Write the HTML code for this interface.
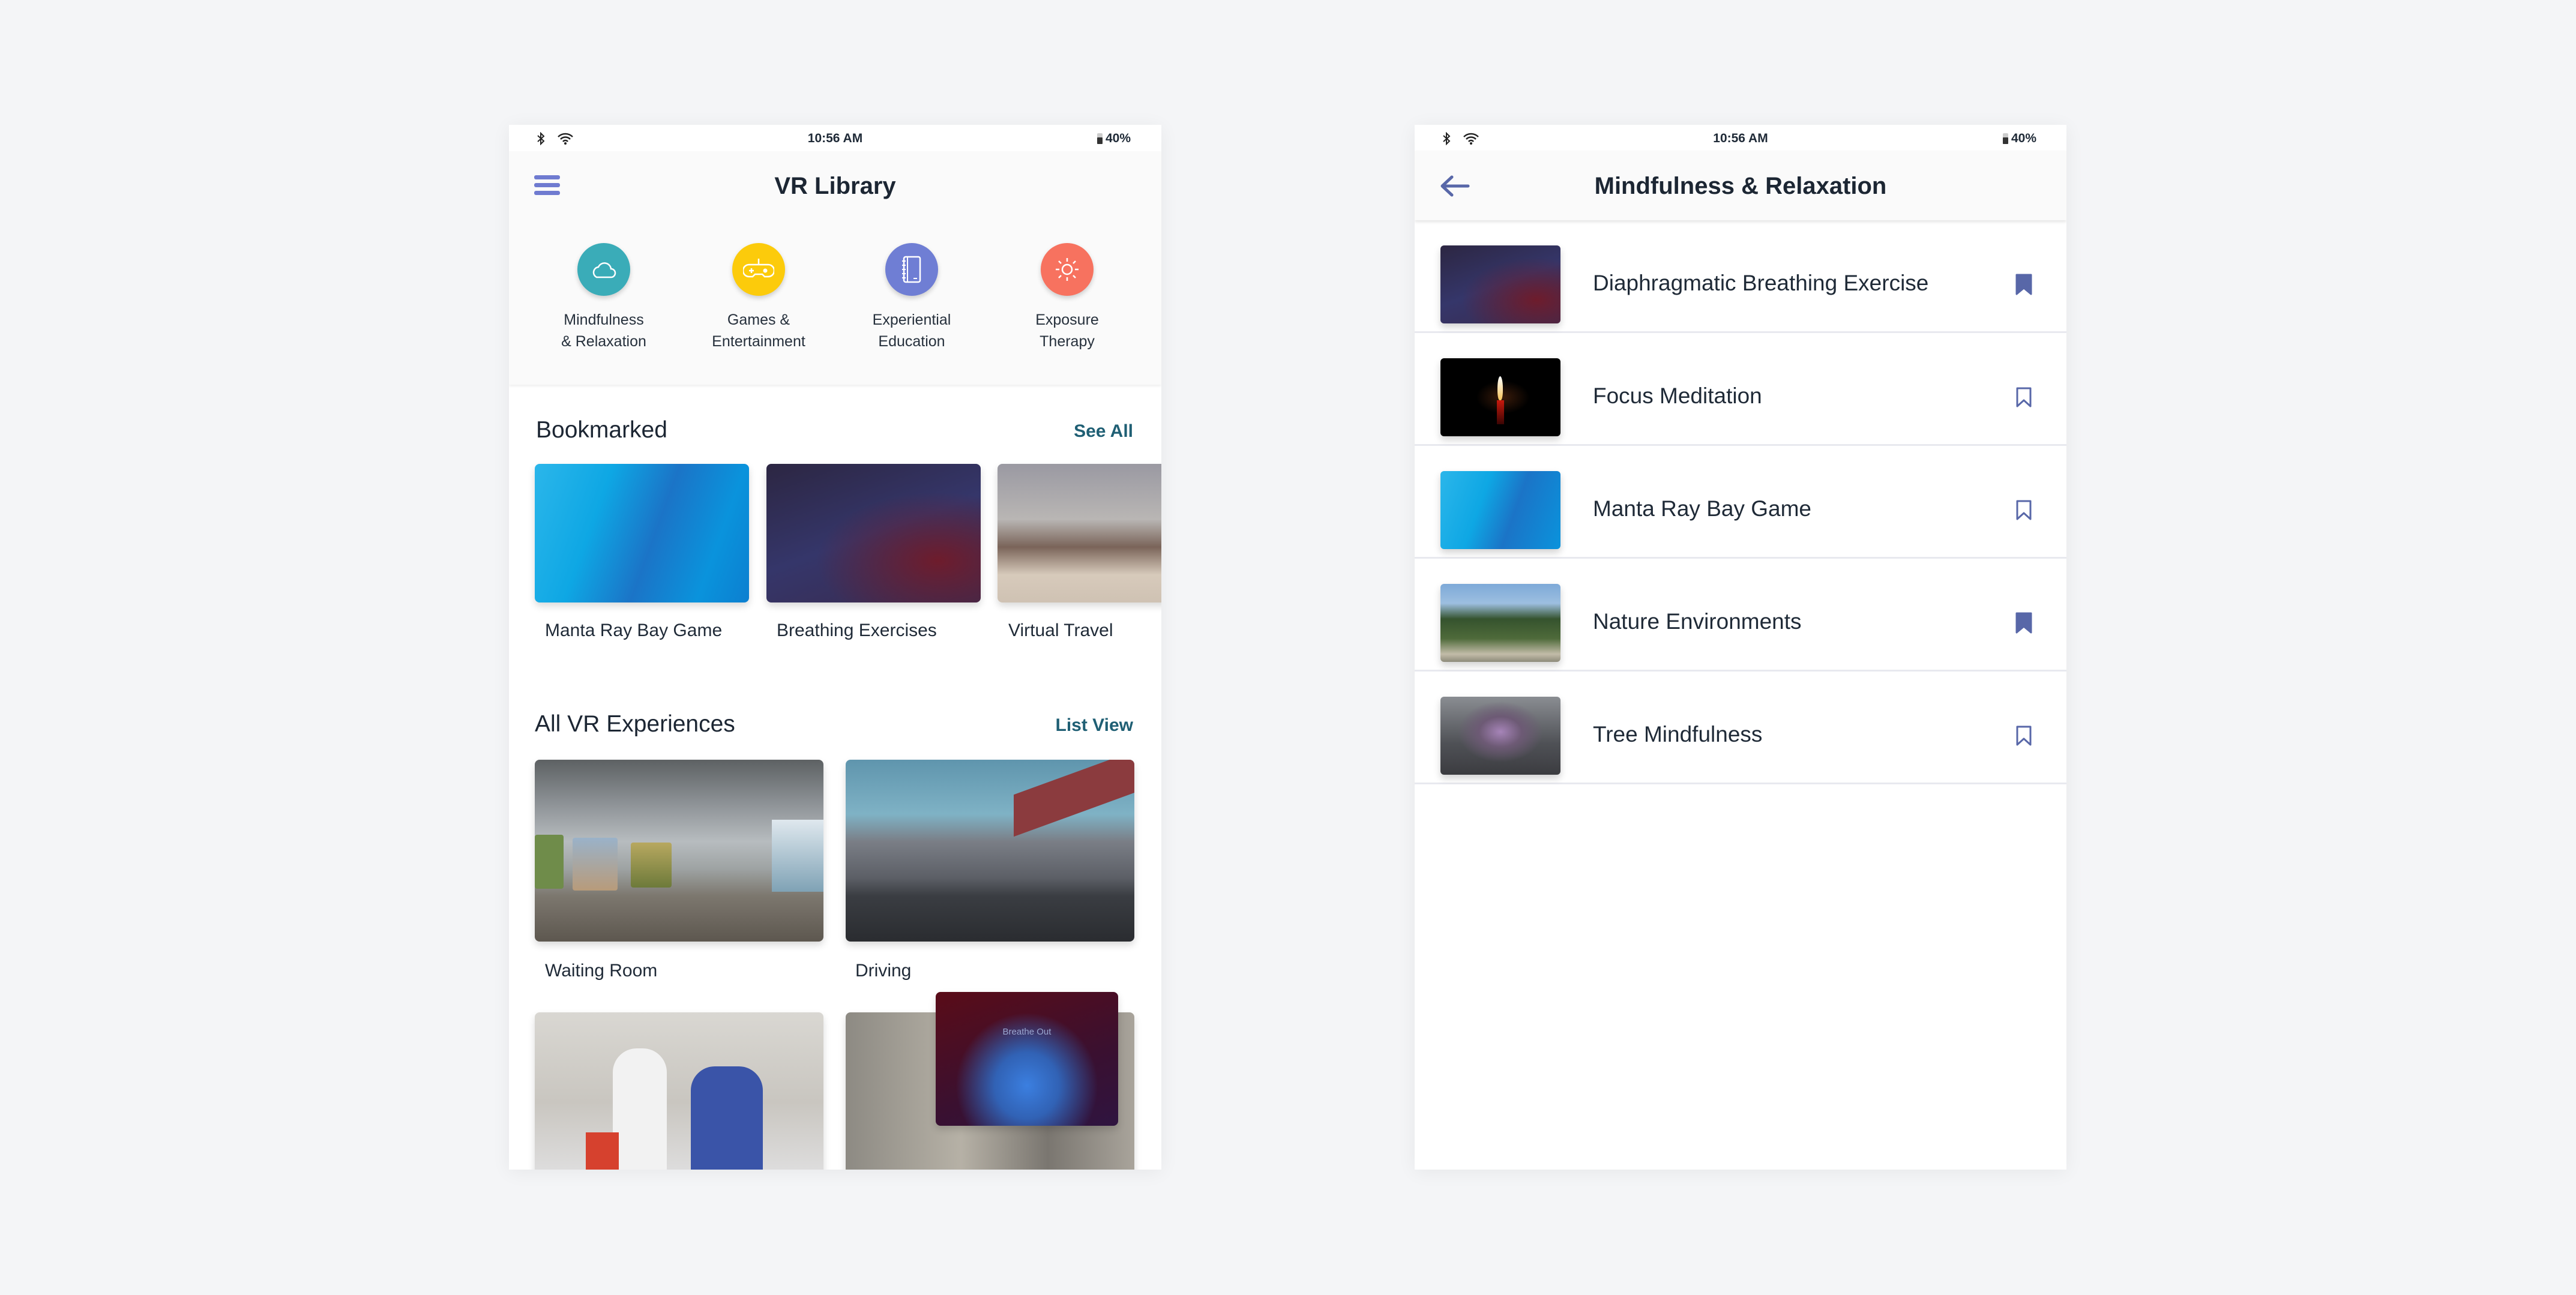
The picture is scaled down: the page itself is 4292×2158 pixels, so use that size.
<!DOCTYPE html>
<html><head><meta charset="utf-8"><style>
*{margin:0;padding:0;box-sizing:border-box}
body{width:4292px;height:2158px;background:#f4f5f7;font-family:"Liberation Sans",sans-serif;color:#1f2a37;position:relative;overflow:hidden}
.ph{position:absolute;top:208px;height:1741px;width:1087px;background:#fff;overflow:hidden;box-shadow:0 4px 30px rgba(0,0,0,.06)}
.abs{position:absolute}
.sb{position:absolute;left:0;top:0;width:100%;height:44px;background:#fff;font-size:21px;font-weight:bold}
.navb{position:absolute;left:0;width:100%;background:#fafafa}
.title{position:absolute;width:100%;text-align:center;font-size:40px;font-weight:bold;color:#1c2633}
.circ{position:absolute;width:88px;height:88px;border-radius:50%;box-shadow:0 4px 8px rgba(0,0,0,.18);display:flex;align-items:center;justify-content:center}
.cl{position:absolute;width:220px;text-align:center;font-size:25px;line-height:36px;color:#26303c}
.h2{position:absolute;font-size:39px;color:#1c2633}
.lnk{position:absolute;font-size:30px;font-weight:bold;color:#1f5f74}
.card{position:absolute;border-radius:8px;box-shadow:0 6px 12px rgba(0,0,0,.15);overflow:hidden}
.lab{position:absolute;font-size:30px;color:#1f2a37}
.row{position:absolute;left:0;width:100%;height:188px;border-bottom:3px solid #e8e9ef}
.th{position:absolute;left:43px;top:42px;width:200px;height:130px;border-radius:6px;box-shadow:0 6px 12px rgba(0,0,0,.18);overflow:hidden}
.rt{position:absolute;left:297px;top:12px;line-height:186px;font-size:37px;color:#1f2a37}
.bm{position:absolute;left:1001px;top:89px}
</style></head><body>

<!-- LEFT PHONE -->
<div class="ph" style="left:848px">
  <div class="sb">
    <svg class="abs" style="left:46px;top:12px" width="14" height="22" viewBox="0 0 14 22"><path d="M2 6l10 9-5 5V2l5 5-10 9" fill="none" stroke="#222" stroke-width="2"/></svg>
    <svg class="abs" style="left:80px;top:13px" width="28" height="20" viewBox="0 0 28 20"><path d="M2 7a17 17 0 0 1 24 0M6 11a11 11 0 0 1 16 0M10 15a5 5 0 0 1 8 0" fill="none" stroke="#222" stroke-width="2.5"/><circle cx="14" cy="18" r="2" fill="#222"/></svg>
    <div class="abs" style="left:0;width:100%;text-align:center;top:11px">10:56 AM</div>
    <div class="abs" style="left:980px;top:14px;width:9px;height:18px;background:#ccc;border-radius:2px"><div style="position:absolute;bottom:0;width:9px;height:11px;background:#333;border-radius:1px"></div></div>
    <div class="abs" style="left:994px;top:11px">40%</div>
  </div>
  <div class="navb" style="top:44px;height:114px"></div>
  <div class="navb" style="top:158px;height:275px;box-shadow:0 3px 4px rgba(0,0,0,.06)"></div>
  <div class="abs" style="left:42px;top:84px;width:43px;height:7px;background:#6f7bd0;border-radius:3px"></div>
  <div class="abs" style="left:42px;top:97px;width:43px;height:7px;background:#6f7bd0;border-radius:3px"></div>
  <div class="abs" style="left:42px;top:110px;width:43px;height:7px;background:#6f7bd0;border-radius:3px"></div>
  <div class="title" style="top:80px">VR Library</div>

  <div class="circ" style="left:114px;top:197px;background:#3aacb8"><svg width="44" height="34" viewBox="0 0 44 34"><path d="M10 30h24a7 7 0 0 0 0-14 11 11 0 0 0-21-3 9 9 0 0 0-3 17z" fill="none" stroke="#fff" stroke-width="2.5"/></svg></div>
  <div class="circ" style="left:372px;top:197px;background:#fccb0b"><svg width="52" height="40" viewBox="0 0 52 40"><path d="M26 2v10M10 12h32a8 8 0 0 1 0 20h-6l-4-4H20l-4 4h-6a8 8 0 0 1 0-20z" fill="none" stroke="#fff" stroke-width="2.5"/><path d="M10 22h8M14 18v8" stroke="#fff" stroke-width="2.5"/><circle cx="37" cy="22" r="3.5" fill="#fff"/></svg></div>
  <div class="circ" style="left:627px;top:197px;background:#6f7ed4"><svg width="34" height="46" viewBox="0 0 34 46"><rect x="4" y="2" width="27" height="42" rx="3" fill="none" stroke="#fff" stroke-width="2.5"/><path d="M10 2v42M1 9h6M1 16h6M1 23h6M1 30h6M1 37h6M20 38h6" stroke="#fff" stroke-width="2"/></svg></div>
  <div class="circ" style="left:886px;top:197px;background:#f7725f"><svg width="44" height="44" viewBox="0 0 44 44"><circle cx="22" cy="22" r="8" fill="none" stroke="#fff" stroke-width="2.5"/><path d="M22 3v6M22 35v6M3 22h6M35 22h6M8 8l4 4M32 32l4 4M8 36l4-4M32 12l4-4" stroke="#fff" stroke-width="2.5"/></svg></div>
  <div class="cl" style="left:48px;top:307px">Mindfulness<br>&amp; Relaxation</div>
  <div class="cl" style="left:306px;top:307px">Games &amp;<br>Entertainment</div>
  <div class="cl" style="left:561px;top:307px">Experiential<br>Education</div>
  <div class="cl" style="left:820px;top:307px">Exposure<br>Therapy</div>

  <div class="h2" style="left:45px;top:487px">Bookmarked</div>
  <div class="lnk" style="right:47px;top:494px">See All</div>
  <div class="card" style="left:43px;top:565px;width:357px;height:231px;background:linear-gradient(110deg,#2bb6ea 0%,#0ea7e4 30%,#1b74c7 55%,#0a93dc 80%,#0c7fd0 100%)"></div>
  <div class="card" style="left:429px;top:565px;width:357px;height:231px;background:radial-gradient(ellipse at 80% 70%,#6e1c2c 0%,rgba(110,28,44,0) 50%),linear-gradient(160deg,#2c2642,#35366a 50%,#3a2a4e)"></div>
  <div class="card" style="left:814px;top:565px;width:357px;height:231px;background:linear-gradient(180deg,#9a99a2 0%,#b9b6b4 40%,#7a6459 60%,#d7cabb 80%,#cfc2b3 100%)"></div>
  <div class="lab" style="left:60px;top:826px">Manta Ray Bay Game</div>
  <div class="lab" style="left:446px;top:826px">Breathing Exercises</div>
  <div class="lab" style="left:832px;top:826px">Virtual Travel</div>

  <div class="h2" style="left:43px;top:977px">All VR Experiences</div>
  <div class="lnk" style="right:47px;top:984px">List View</div>
  <div class="card" style="left:43px;top:1058px;width:481px;height:303px;background:linear-gradient(180deg,#5d6163 0%,#8f9498 25%,#b7bcbf 45%,#9ea3a3 60%,#7c776e 75%,#5d574f 100%)">
    <div class="abs" style="left:0;top:125px;width:48px;height:90px;background:#6f8c4a;border-radius:4px"></div>
    <div class="abs" style="left:63px;top:130px;width:75px;height:88px;background:linear-gradient(#9ab2c9,#b89b7a);border-radius:4px"></div>
    <div class="abs" style="left:160px;top:138px;width:68px;height:75px;background:linear-gradient(#b8a860,#6d7a3a);border-radius:4px"></div>
    <div class="abs" style="left:395px;top:100px;width:86px;height:120px;background:linear-gradient(#dfe8ee,#7fa2b5)"></div>
  </div>
  <div class="card" style="left:561px;top:1058px;width:481px;height:303px;background:linear-gradient(180deg,#5f95ad 0%,#7fb2c5 30%,#7a7e86 45%,#5c5f66 65%,#3a3d42 75%,#2a2c30 100%)">
    <div class="abs" style="left:280px;top:20px;width:210px;height:70px;background:#8b3b3e;transform:skewY(-20deg)"></div>
  </div>
  <div class="lab" style="left:60px;top:1393px">Waiting Room</div>
  <div class="lab" style="left:577px;top:1393px">Driving</div>
  <div class="card" style="left:43px;top:1479px;width:481px;height:300px;background:linear-gradient(180deg,#d9d7d2,#c9c6c0 50%,#e4e4e6)">
    <div class="abs" style="left:260px;top:90px;width:120px;height:200px;background:#3a54a8;border-radius:40px 40px 0 0"></div>
    <div class="abs" style="left:130px;top:60px;width:90px;height:240px;background:#f2f2f2;border-radius:40px 40px 0 0"></div>
    <div class="abs" style="left:85px;top:200px;width:55px;height:100px;background:#d6412e"></div>
  </div>
  <div class="card" style="left:561px;top:1479px;width:481px;height:300px;background:linear-gradient(90deg,#8d8a83,#b6b1a6 40%,#7a7670 70%,#a9a49b)"></div>
  <div class="card" style="left:711px;top:1445px;width:304px;height:223px;background:radial-gradient(ellipse at 50% 70%,#3b7fe0 0%,#3162b5 25%,rgba(60,40,110,0) 55%),linear-gradient(160deg,#5a0c18,#3a1030 60%,#2f1440)">
    <div class="abs" style="width:100%;text-align:center;top:58px;font-size:15px;color:#9aa6d0">Breathe Out</div>
  </div>
</div>

<!-- RIGHT PHONE -->
<div class="ph" style="left:2357px;width:1086px">
  <div class="sb">
    <svg class="abs" style="left:46px;top:12px" width="14" height="22" viewBox="0 0 14 22"><path d="M2 6l10 9-5 5V2l5 5-10 9" fill="none" stroke="#222" stroke-width="2"/></svg>
    <svg class="abs" style="left:80px;top:13px" width="28" height="20" viewBox="0 0 28 20"><path d="M2 7a17 17 0 0 1 24 0M6 11a11 11 0 0 1 16 0M10 15a5 5 0 0 1 8 0" fill="none" stroke="#222" stroke-width="2.5"/><circle cx="14" cy="18" r="2" fill="#222"/></svg>
    <div class="abs" style="left:0;width:100%;text-align:center;top:11px">10:56 AM</div>
    <div class="abs" style="left:980px;top:14px;width:9px;height:18px;background:#ccc;border-radius:2px"><div style="position:absolute;bottom:0;width:9px;height:11px;background:#333;border-radius:1px"></div></div>
    <div class="abs" style="left:994px;top:11px">40%</div>
  </div>
  <div class="navb" style="top:43px;height:116px;box-shadow:0 3px 5px rgba(0,0,0,.1);z-index:2"></div>
  <svg class="abs" style="left:42px;top:84px;z-index:3" width="50" height="36" viewBox="0 0 50 36"><path d="M47 18H5M20 3L4 18l16 15" fill="none" stroke="#5867a8" stroke-width="5" stroke-linecap="round" stroke-linejoin="round"/></svg>
  <div class="title" style="top:80px;z-index:3">Mindfulness &amp; Relaxation</div>

  <div class="row" style="top:159px">
    <div class="th" style="background:radial-gradient(ellipse at 80% 70%,#6e1c2c 0%,rgba(110,28,44,0) 55%),linear-gradient(160deg,#2c2642,#35366a 50%,#3a2a4e)"></div>
    <div class="rt">Diaphragmatic Breathing Exercise</div>
    <svg class="bm" width="28" height="36" viewBox="0 0 28 36"><path d="M2 2h24v32l-12-10-12 10z" fill="#5867a8" stroke="#5867a8" stroke-width="3" stroke-linejoin="round"/></svg>
  </div>
  <div class="row" style="top:347px">
    <div class="th" style="background:radial-gradient(ellipse at 52% 50%,#3a1b0a 0%,#000 30%)">
      <div class="abs" style="left:95px;top:30px;width:9px;height:40px;background:linear-gradient(#fff,#f6c45a);border-radius:50% 50% 40% 40%"></div>
      <div class="abs" style="left:94px;top:70px;width:12px;height:40px;background:linear-gradient(#c9190d,#3a0503)"></div>
    </div>
    <div class="rt">Focus Meditation</div>
    <svg class="bm" width="28" height="36" viewBox="0 0 28 36"><path d="M3 3h22v30l-11-10-11 10z" fill="none" stroke="#5867a8" stroke-width="3" stroke-linejoin="round"/></svg>
  </div>
  <div class="row" style="top:535px">
    <div class="th" style="background:linear-gradient(110deg,#2bb6ea 0%,#0ea7e4 35%,#1b74c7 60%,#0a93dc 100%)"></div>
    <div class="rt">Manta Ray Bay Game</div>
    <svg class="bm" width="28" height="36" viewBox="0 0 28 36"><path d="M3 3h22v30l-11-10-11 10z" fill="none" stroke="#5867a8" stroke-width="3" stroke-linejoin="round"/></svg>
  </div>
  <div class="row" style="top:723px">
    <div class="th" style="background:linear-gradient(180deg,#7da9d8 0%,#9dbfe0 25%,#35532e 45%,#4e6a3a 70%,#c2bca8 90%,#8d8a7a 100%)"></div>
    <div class="rt">Nature Environments</div>
    <svg class="bm" width="28" height="36" viewBox="0 0 28 36"><path d="M2 2h24v32l-12-10-12 10z" fill="#5867a8" stroke="#5867a8" stroke-width="3" stroke-linejoin="round"/></svg>
  </div>
  <div class="row" style="top:911px">
    <div class="th" style="background:radial-gradient(ellipse at 50% 45%,#a684b8 0%,#6d5a75 25%,rgba(60,60,60,0) 50%),linear-gradient(180deg,#8a8d92,#4f5156 60%,#3b3c40)"></div>
    <div class="rt">Tree Mindfulness</div>
    <svg class="bm" width="28" height="36" viewBox="0 0 28 36"><path d="M3 3h22v30l-11-10-11 10z" fill="none" stroke="#5867a8" stroke-width="3" stroke-linejoin="round"/></svg>
  </div>
</div>
</body></html>
